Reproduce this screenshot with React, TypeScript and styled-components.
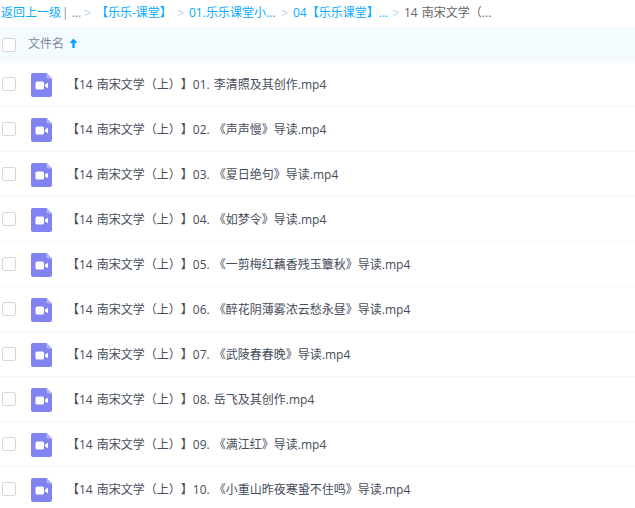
import styled, { createGlobalStyle } from 'styled-components';

const GlobalStyle = createGlobalStyle`
	html, body {
		margin: 0;
		padding: 0;
		background: #fff;
	}
	body {
		font-family: 'Open Sans', 'Noto Sans CJK SC', sans-serif;
		font-size: 12px;
		line-height: 16px;
		word-spacing: 1px;
		text-spacing-trim: space-all;
		font-feature-settings: 'palt' 0, 'chws' 0;
		overflow: hidden;
	}
`;

const Page = styled.div`
	width: 635px;
	height: 508px;
	overflow: hidden;
`;

const Breadcrumb = styled.div`
	display: flex;
	align-items: center;
	height: 26px;
	padding-left: 1px;
	box-sizing: border-box;
	white-space: nowrap;
`;

const Crumb = styled.span<{ $width: number }>`
	width: ${({ $width }) => $width}px;
	flex-shrink: 0;
	color: #09aaff;
`;

const CurrentCrumb = styled.span`
	color: #666;
`;

const Muted = styled.span`
	color: #888;
	width: 22px;
	flex-shrink: 0;
	word-spacing: 0;
`;

const Arrow = styled.span`
	color: #c5d9f1;
	font-family: 'Liberation Sans', sans-serif;
	font-size: 12px;
	width: 12px;
	flex-shrink: 0;
`;

const HeaderRow = styled.div`
	display: flex;
	align-items: center;
	height: 37px;
	background: #f4fbff;
	color: #818999;
`;

const Checkbox = styled.span`
	box-sizing: border-box;
	width: 14px;
	height: 14px;
	margin-left: 2px;
	border: 1px solid #d4d7de;
	border-radius: 2px;
	background: #fff;
	flex-shrink: 0;
`;

const RowCheckbox = styled(Checkbox)`
	margin-bottom: 2px;
`;

const HeaderLabel = styled.span`
	margin-left: 12px;
	padding-bottom: 2px;
`;

const SortIcon = styled.svg`
	margin-left: 5px;
	margin-bottom: 3px;
	width: 9px;
	height: 10px;
`;

const FileList = styled.div`
	margin-top: -1px;
`;

const FileRow = styled.div`
	box-sizing: border-box;
	display: flex;
	align-items: center;
	height: 45px;
	padding-top: 2px;
	border-bottom: 1px solid #f4f6fa;
	color: #454d5a;
	white-space: nowrap;
`;

const VideoIcon = styled.svg`
	width: 21px;
	height: 24px;
	margin-left: 15px;
	flex-shrink: 0;
`;

const FileName = styled.span`
	margin-left: 15px;
`;

const files = [
	'01. 李清照及其创作.mp4',
	'02. 《声声慢》导读.mp4',
	'03. 《夏日绝句》导读.mp4',
	'04. 《如梦令》导读.mp4',
	'05. 《一剪梅红藕香残玉簟秋》导读.mp4',
	'06. 《醉花阴薄雾浓云愁永昼》导读.mp4',
	'07. 《武陵春春晚》导读.mp4',
	'08. 岳飞及其创作.mp4',
	'09. 《满江红》导读.mp4',
	'10. 《小重山昨夜寒蛩不住鸣》导读.mp4',
];

const App = () => {
	return (
		<Page>
			<GlobalStyle />
			<Breadcrumb>
				<Crumb $width={61}>返回上一级</Crumb>
				<Muted>|&nbsp;...</Muted>
				<Arrow>&gt;</Arrow>
				<Crumb $width={81}>【乐乐-课堂】</Crumb>
				<Arrow>&gt;</Arrow>
				<Crumb $width={92}>01.乐乐课堂小...</Crumb>
				<Arrow>&gt;</Arrow>
				<Crumb $width={99}>04【乐乐课堂】...</Crumb>
				<Arrow>&gt;</Arrow>
				<CurrentCrumb>14 南宋文学（...</CurrentCrumb>
			</Breadcrumb>
			<HeaderRow>
				<Checkbox />
				<HeaderLabel>文件名</HeaderLabel>
				<SortIcon viewBox="0 0 9 10">
					<path d="M4.5 0.5 L8.5 5 H5.7 V10 H3.3 V5 H0.5 Z" fill="#06a7ff" />
				</SortIcon>
			</HeaderRow>
			<FileList>
				{files.map((name) => (
					<FileRow key={name}>
						<RowCheckbox />
						<VideoIcon viewBox="0 0 21 24">
							<path
								d="M2 0 H15.5 L21 5.5 V22 a2 2 0 0 1 -2 2 H2 a2 2 0 0 1 -2 -2 V2 a2 2 0 0 1 2 -2 Z"
								fill="#8183f1"
							/>
							<path d="M15.5 0 L21 5.5 H17 a1.5 1.5 0 0 1 -1.5 -1.5 Z" fill="#b3b4f7" />
							<rect x="4.5" y="8.5" width="8.5" height="8" rx="1.6" fill="#fff" />
							<path d="M14 11.5 L17 9.8 V15.2 L14 13.5 Z" fill="#fff" />
						</VideoIcon>
						<FileName>【14 南宋文学（上）】{name}</FileName>
					</FileRow>
				))}
			</FileList>
		</Page>
	);
};

export default App;
